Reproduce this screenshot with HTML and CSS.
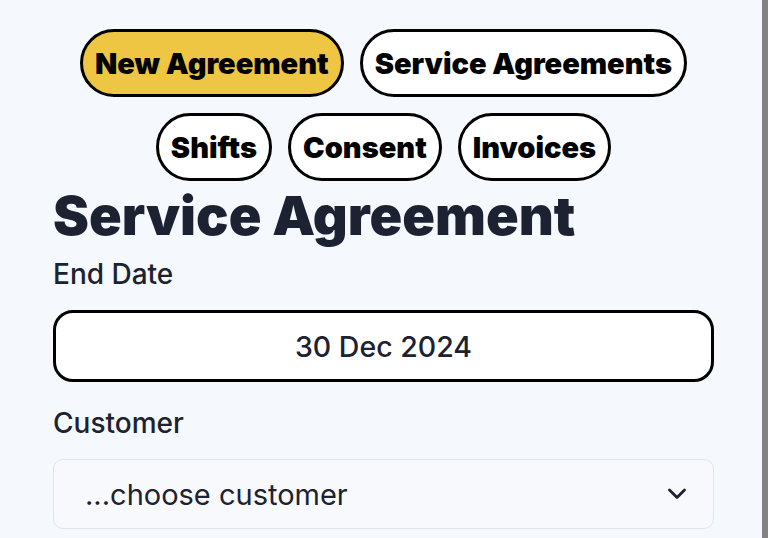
FILE: index.html
```html
<!DOCTYPE html>
<html lang="en">
<head>
<meta charset="utf-8">
<title>Service Agreement</title>
<link rel="stylesheet" href="styles.css">
</head>
<body>
<div class="page">
  <main class="content">
    <nav class="tabs">
      <a class="pill pill-active">New Agreement</a>
      <a class="pill">Service Agreements</a>
      <a class="pill">Shifts</a>
      <a class="pill">Consent</a>
      <a class="pill">Invoices</a>
    </nav>
    <h1 class="title">Service Agreement</h1>
    <div class="field">
      <label class="label">End Date</label>
      <div class="date-input">30 Dec 2024</div>
    </div>
    <div class="field field-second">
      <label class="label">Customer</label>
      <div class="select">
        <span class="select-text">...choose customer</span>
        <svg class="chevron" width="20" height="12" viewBox="0 0 20 12" aria-hidden="true">
          <path d="M2.5 2 L10 9.5 L17.5 2" fill="none" stroke="#1c2231" stroke-width="2.8" stroke-linecap="round" stroke-linejoin="round"/>
        </svg>
      </div>
    </div>
  </main>
</div>
</body>
</html>
```

FILE: styles.css
```css
* { box-sizing: border-box; }
html, body { margin: 0; padding: 0; }
body {
  background: #f5f8fc;
  font-family: Inter, "Noto Sans", sans-serif;
  color: #1c2231;
  overflow: hidden;
}
.page {
  width: 768px;
  height: 538px;
  border-right: 6px solid #828282;
}
.content {
  padding: 29px 48px 0 53px;
}
.tabs {
  display: flex;
  flex-wrap: wrap;
  justify-content: center;
  gap: 16px;
}
.pill {
  display: flex;
  align-items: center;
  height: 68px;
  padding: 0 12px;
  border: 3px solid #000;
  border-radius: 999px;
  background: #fff;
  color: #000;
  font-size: 29px;
  font-weight: 900;
  white-space: nowrap;
}
.pill-active { background: #eec643; }
.title {
  margin: 5px 0 0;
  font-size: 54px;
  font-weight: 900;
  line-height: 60px;
  color: #1c2231;
}
.field { display: flex; flex-direction: column; }
.label {
  font-size: 28px;
  font-weight: 500;
  line-height: 36px;
  margin-top: 10px;
}
.field-second .label { margin-top: 23px; }
.date-input {
  margin-top: 18px;
  height: 72px;
  border: 3px solid #000;
  border-radius: 20px;
  background: #fff;
  display: flex;
  align-items: center;
  justify-content: center;
  font-size: 28.5px;
  font-weight: 500;
}
.select {
  margin-top: 18px;
  height: 70px;
  border: 1px solid #e1e5eb;
  border-radius: 10px;
  background: #f7f9fc;
  display: flex;
  align-items: center;
  justify-content: space-between;
  padding: 0 26px 0 31px;
  font-size: 29px;
}
.chevron { display: block; }
```
